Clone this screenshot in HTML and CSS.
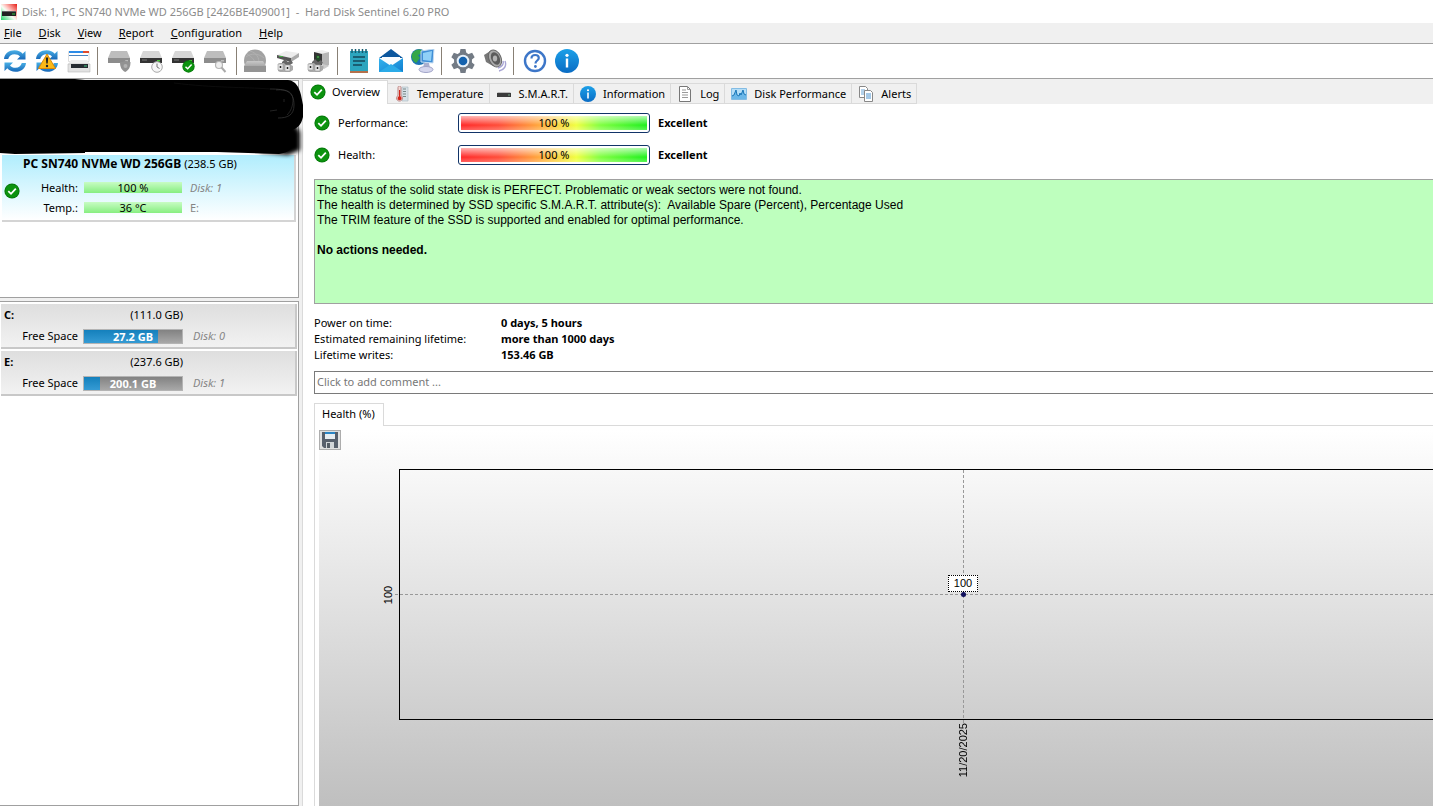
FILE: index.html
```
<!DOCTYPE html>
<html lang="en">
<head>
<meta charset="utf-8">
<title>Hard Disk Sentinel</title>
<link rel="stylesheet" href="styles.css">
</head>
<body>
<svg class="defs" aria-hidden="true">
  <defs>
    <linearGradient id="blueV" x1="0" y1="0" x2="0" y2="1"><stop offset="0" stop-color="#4ab0e6"/><stop offset="1" stop-color="#1768b8"/></linearGradient>
    <linearGradient id="info" x1="0" y1="0" x2="0" y2="1"><stop offset="0" stop-color="#1ca0e8"/><stop offset="1" stop-color="#0a6cc4"/></linearGradient>
    <linearGradient id="greyV" x1="0" y1="0" x2="0" y2="1"><stop offset="0" stop-color="#c8c8c8"/><stop offset="1" stop-color="#858585"/></linearGradient>
    <linearGradient id="mail" x1="0" y1="0" x2="1" y2="1"><stop offset="0" stop-color="#35b4ee"/><stop offset="1" stop-color="#0f7ed0"/></linearGradient>
    <linearGradient id="logo" x1="0" y1="1" x2="1" y2="0"><stop offset="0" stop-color="#22d466"/><stop offset=".45" stop-color="#f6fff6"/><stop offset=".6" stop-color="#ffc4c0"/><stop offset="1" stop-color="#e51c14"/></linearGradient>
    <symbol id="ok" viewBox="0 0 16 16"><circle cx="8" cy="8" r="7.6" fill="#067a0b"/><circle cx="8" cy="8" r="6.6" fill="#0c930f"/><path d="M4.3 8.2 7 10.8 11.8 5.6" fill="none" stroke="#fff" stroke-width="1.8"/></symbol>
    <symbol id="infoicon" viewBox="0 0 24 24"><circle cx="12" cy="12" r="12" fill="url(#info)"/><circle cx="12" cy="6.3" r="1.6" fill="#fff"/><path d="M10.8 9.6h2.4v9h-2.4z" fill="#fff"/></symbol>
    <symbol id="sync" viewBox="0 0 24 24"><path d="M1 10C1.5 4.500 6 1.200 11.500 1.200c3.600 0 6.300 1.300 8.200 3.500L22.500 2v8.500H14l3-3C15.700 6 13.900 5.200 11.500 5.200 8.300 5.200 6 7.200 5.200 10z" fill="url(#blueV)"/><path d="M23 14c-.5 5.500-5 8.800-10.500 8.800-3.600 0-6.300-1.300-8.200-3.500L1.500 22v-8.500H10l-3 3c1.300 1.500 3.100 2.300 5.500 2.300 3.200 0 5.500-2 6.300-4.800z" fill="url(#blueV)"/></symbol>
    <symbol id="drive" viewBox="0 0 24 24"><path d="M4 2h16l3 7H1z" fill="#d6d6d6"/><path d="M1 9h22v5H1z" fill="#333"/><path d="M3 11h5" stroke="#777"/><path d="M18 11h3v1.500h-3z" fill="#45c832"/></symbol>
    <symbol id="driveoff" viewBox="0 0 24 24"><path d="M4 2h16l3 7H1z" fill="#bdbdbd"/><path d="M1 9h22v5H1z" fill="#8c8c8c"/><path d="M18 11h3v1.500h-3z" fill="#bbb"/></symbol>
    <symbol id="plugs" viewBox="0 0 24 24"><path d="M7 13l3-3 3 3 3-2 2 3-3 2H7z" fill="#666"/><path d="M3 15l2-1h4l2 2h5l2 1v4l-3 2H5l-2-1z" fill="#aaa"/><path d="M3 15h5v6H3zM10 16h5v6h-5z" fill="#e4e4e4" stroke="#999" stroke-width=".6"/><path d="M5.500 17v2M12.500 18v2" stroke="#222" stroke-width="1.500"/></symbol>
  </defs>
</svg>

<header class="titlebar">
  <svg class="logo" viewBox="0 0 16 16"><path d="M0 0h16v16H0z" fill="url(#logo)"/><path d="M1 7h14v5H1z" fill="#222"/><path d="M1 7h14v1H1z" fill="#666"/><path d="M11 10h3" stroke="#3c4"/></svg>
  <h1 class="title">Disk: 1, PC SN740 NVMe WD 256GB [2426BE409001]&nbsp; -&nbsp; Hard Disk Sentinel 6.20 PRO</h1>
</header>

<nav class="menubar">
  <button class="menu"><u>F</u>ile</button>
  <button class="menu"><u>D</u>isk</button>
  <button class="menu"><u>V</u>iew</button>
  <button class="menu"><u>R</u>eport</button>
  <button class="menu"><u>C</u>onfiguration</button>
  <button class="menu"><u>H</u>elp</button>
</nav>

<div class="toolbar" role="toolbar">
  <button class="tool" aria-label="Refresh"><svg class="ico24"><use href="#sync"/></svg></button>
  <button class="tool" aria-label="Refresh with warning"><svg class="ico24" viewBox="0 0 24 24"><use href="#sync"/><path d="M12 5 20.500 19.500h-17z" fill="#fbb917" stroke="#dd8a0a" stroke-linejoin="round"/><path d="M10.800 8.500h2.400l-.5 6h-1.400z" fill="#222"/><circle cx="12" cy="17" r="1.200" fill="#222"/></svg></button>
  <button class="tool" aria-label="Disk window"><svg class="ico24" viewBox="0 0 24 24"><path d="M1.500 2.500h20.500v10H1.500z" fill="#fff" stroke="#ddd"/><path d="M2 2h14v2H2z" fill="#2d8ce8"/><path d="M16 2h6v2h-6z" fill="#e04a2c"/><path d="M2 6.500h19" stroke="#4a84c0"/><path d="M4 11h16l3 4H1z" fill="#ececec"/><path d="M1 15h22v8H1z" fill="#e2e2e2" stroke="#bbb" stroke-width=".6"/><path d="M4 15h17v4H4z" fill="#252a30"/><path d="M17 17h3" stroke="#4c8"/></svg></button>
  <span class="sep"></span>
  <button class="tool" aria-label="Disk protection" disabled><svg class="ico24" viewBox="0 0 24 24"><use href="#driveoff"/><path d="M13 13c2 0 4-.5 5.500-1.500C20 12.500 22 13 23.500 13c0 5-1.500 8-5.300 10C14.500 21 13 18 13 13z" fill="#929292"/><circle cx="18.500" cy="17" r="2" fill="#b2b2b2"/></svg></button>
  <button class="tool" aria-label="Disk schedule"><svg class="ico24" viewBox="0 0 24 24"><use href="#drive"/><circle cx="18" cy="18" r="5.300" fill="#f6f6f6" stroke="#aaa"/><path d="M18 14.500V18l2.500 1.500" fill="none" stroke="#777"/></svg></button>
  <button class="tool" aria-label="Disk test"><svg class="ico24" viewBox="0 0 24 24"><use href="#drive"/><use href="#ok" x="11" y="11" width="13" height="13"/></svg></button>
  <button class="tool" aria-label="Disk search" disabled><svg class="ico24" viewBox="0 0 24 24"><use href="#driveoff"/><circle cx="16" cy="16" r="3.500" fill="#eee" stroke="#b5b5b5" stroke-width="1.200"/><path d="m18.500 18.500 4 4.500" stroke="#aaa" stroke-width="2"/></svg></button>
  <span class="sep sep-late"></span>
  <button class="tool" aria-label="Network disk" disabled><svg class="ico24" viewBox="0 0 24 24"><circle cx="12" cy="11.500" r="11" fill="#a2a2a2"/><path d="M3 8c5-4 12-4 18 1M7 2c7 2 9 7 9 12M4 5c5 3 8 6 8 10" fill="none" stroke="#b0b0b0"/><path d="M4 12h16l3 5v6H1v-6z" fill="url(#greyV)"/><path d="M1 17h22v6H1z" fill="#949494"/></svg></button>
  <button class="tool" aria-label="Connect device"><svg class="ico24" viewBox="0 0 24 24"><path d="m2 6 9-4 13 2-8 5z" fill="#ededed"/><path d="m2 6 14 3v4L2 9z" fill="#555"/><path d="m16 9 8-5v4l-8 5z" fill="#aaa"/><path d="M4 7.500h4" stroke="#4a4"/><use href="#plugs"/></svg></button>
  <button class="tool" aria-label="Connect enclosure"><svg class="ico24" viewBox="0 0 24 24"><path d="m7 3 8-2 7 2-8 2z" fill="#eee"/><path d="m14 5 8-2v13l-6 4z" fill="#b5b5b5"/><path d="M7 3l8 2v11l-8-2z" fill="#333"/><path d="m9 6 4 1v5l-4-1z" fill="#264b2c"/><path d="M10 8h2" stroke="#5c5"/><path d="m16 15 6 2-5 3z" fill="#ccc"/><g transform="translate(-2)"><use href="#plugs"/></g></svg></button>
  <span class="sep"></span>
  <button class="tool" aria-label="Report"><svg class="ico24" viewBox="0 0 24 24"><path d="M3 2h18v20H3z" fill="#2ca5be"/><path d="M3 22h18v2H3z" fill="#b4714b"/><path d="M5 0v4M8.500 0v4M12 0v4M15.500 0v4M19 0v4" stroke="#135b70" stroke-width="1.500"/><path d="M6 8h12M6 12h12M6 16h9" stroke="#14475a" stroke-width="1.500"/></svg></button>
  <button class="tool" aria-label="Send mail"><svg class="ico24" viewBox="0 0 24 24"><path d="M0 9 12 0l12 9z" fill="#0c579e"/><path d="M3 8h18v9H3z" fill="#f8fcff"/><path d="m0 9 12 8L24 9v14H0z" fill="url(#mail)"/><path d="m0 23 12-8 12 8z" fill="#2babe8"/></svg></button>
  <button class="tool" aria-label="Network"><svg class="ico24" viewBox="0 0 24 24"><circle cx="8" cy="8" r="8" fill="#1b73b4"/><path d="M1 5c3-5 7-5 10-4l-1 4-3 1 2 3-4 5C2 12 0 9 1 5z" fill="#35a748"/><path d="m10 2 13-2-1 14-12-1z" fill="#3f8ed6" stroke="#c4dcf2"/><path d="m12 4 9-2-1 10-8-1z" fill="#90d0f7"/><path d="M13 14h5l1 5h-7z" fill="#a9afcf"/><ellipse cx="15" cy="20.500" rx="7" ry="3" fill="#d5d6ed" stroke="#a0a4c8"/></svg></button>
  <span class="sep"></span>
  <button class="tool" aria-label="Settings"><svg class="ico24" viewBox="0 0 24 24"><g fill="#737b85"><circle cx="12" cy="12" r="9"/><g id="teeth"><path d="M9.500 0h5l1 5h-7zM9.500 24h5l1-5h-7z"/></g><use href="#teeth" transform="rotate(60 12 12)"/><use href="#teeth" transform="rotate(120 12 12)"/></g><circle cx="12" cy="12" r="6.300" fill="#e7f1fa"/><circle cx="12" cy="12" r="4.300" fill="#1462ae"/></svg></button>
  <button class="tool" aria-label="Sound"><svg class="ico24" viewBox="0 0 24 24"><path d="M1 6 9 1l9 15-8 1-7-4z" fill="#777"/><ellipse cx="12" cy="9.500" rx="6" ry="9" transform="rotate(-25 12 9.500)" fill="#aaa" stroke="#666"/><ellipse cx="12.500" cy="9.500" rx="4.200" ry="6.500" transform="rotate(-25 12.500 9.500)" fill="#5c5c5c"/><ellipse cx="12" cy="9.500" rx="2.200" ry="3" fill="#b4b4b4"/><path d="M20 12c1 3-1 6-5 7M22 12c2 5-1 9-6 10" fill="none" stroke="#a8a5d4" stroke-width="1.400"/></svg></button>
  <span class="sep"></span>
  <button class="tool" aria-label="Help"><svg class="ico24" viewBox="0 0 24 24"><circle cx="12" cy="12" r="10" fill="#fff" stroke="#3d76c8" stroke-width="2.400"/><path d="M8.500 9.500C8.500 7.200 10 6 12.200 6c2.100 0 3.600 1.100 3.600 3 0 2.500-3.300 2.600-3.300 5.500" fill="none" stroke="#3d76c8" stroke-width="2.200"/><circle cx="12.400" cy="17.500" r="1.400" fill="#3d76c8"/></svg></button>
  <button class="tool" aria-label="About"><svg class="ico24"><use href="#infoicon"/></svg></button>
</div>

<div class="workspace">
  <aside class="sidebar">
    <section class="pane disks">
      <svg class="scribble" viewBox="0 0 304 80" aria-hidden="true">
        <defs><filter id="soft" x="-10%" y="-10%" width="120%" height="120%"><feGaussianBlur stdDeviation="2"/></filter></defs>
        <path d="M258 45h36l6 8v18l-12 5-28-3z" filter="url(#soft)"/>
        <path d="M0 0h75l10 1h203c8 1 11 7 13 15l2 10v12c-2 8-5 11-11 13v17c-2 4-7 6-13 7l-62-2H85v1l-70 1-15-1z"/>
        <path d="M174 4c40 5 70 4 96 6" fill="none" stroke="#0c0c0c"/>
        <path d="M270 10c16 0 24 2 24 16 0 10-6 13-16 13" fill="none" stroke="#333" stroke-width=".8"/>
        <path d="M276 11c12-1 16 2 17 9 0 7-2 12-6 16M270 32l7-1M284 20v3" fill="none" stroke="#444" stroke-width=".5"/>
      </svg>
      <article class="disk">
        <h2 class="disk-name"><b>PC SN740 NVMe WD 256GB</b> (238.5 GB)</h2>
        <svg class="ico16 disk-ok"><use href="#ok"/></svg>
        <dl class="stats">
          <dt>Health:</dt><dd class="meter">100 %</dd><dd class="hint">Disk: 1</dd>
          <dt>Temp.:</dt><dd class="meter">36 °C</dd><dd class="hint hint-drive">E:</dd>
        </dl>
      </article>
    </section>
    <section class="pane volumes">
      <article class="volume">
        <b>C:</b><span class="size">(111.0 GB)</span><span></span>
        <span class="free">Free Space</span>
        <span class="usage"><span class="fill" style="width:76%"></span><b class="value">27.2 GB</b></span>
        <span class="hint">Disk: 0</span>
      </article>
      <article class="volume">
        <b>E:</b><span class="size">(237.6 GB)</span><span></span>
        <span class="free">Free Space</span>
        <span class="usage"><span class="fill" style="width:16%"></span><b class="value">200.1 GB</b></span>
        <span class="hint">Disk: 1</span>
      </article>
    </section>
  </aside>

  <main class="main">
    <div class="tabs" role="tablist">
      <button class="tab active" role="tab"><svg class="ico16"><use href="#ok"/></svg>Overview</button>
      <button class="tab" role="tab"><svg class="ico16" viewBox="0 0 16 16"><path d="M8 1h6v14H8z" fill="#d8e2e8" stroke="#a9b8c0" stroke-width=".6"/><path d="M9 3h3M9 5.500h3M9 8h3M9 10.500h3" stroke="#788"/><path d="M4 1.500c0-2 3-2 3 0v8a3 3 0 1 1-3 0z" fill="#f4d8d4" stroke="#b88"/><path d="M5 4h1.200v6.300a2 2 0 1 1-1.200 0z" fill="#d0281c"/></svg>Temperature</button>
      <button class="tab" role="tab"><svg class="ico16" viewBox="0 0 16 16"><path d="M2 6h12l1 1H1z" fill="#bbb"/><path d="M1 7h14v4H1z" fill="#3b3b3b"/><path d="M12 9h2" stroke="#7a8"/></svg>S.M.A.R.T.</button>
      <button class="tab" role="tab"><svg class="ico16"><use href="#infoicon"/></svg>Information</button>
      <button class="tab" role="tab"><svg class="ico16" viewBox="0 0 16 16"><path d="M2.500.5h8l3 3v12h-11z" fill="#fff" stroke="#777"/><path d="M10.500.5v3h3M5 4h4M5 6.500h6M5 9h6M5 11.500h6" fill="none" stroke="#999"/></svg>Log</button>
      <button class="tab" role="tab"><svg class="ico16" viewBox="0 0 16 16"><path d="M.5 2.500h15v11H.5z" fill="#b5def7" stroke="#83bce4"/><path d="m1 10 2-1 2-5 1 5 2 1 1-3 1 2 2-5 1 4 2 1v4H1z" fill="#6bb7e8"/><path d="m1 10 2-1 2-5 1 5 2 1 1-3 1 2 2-5 1 4 2 1" fill="none" stroke="#1976b8"/></svg>Disk Performance</button>
      <button class="tab" role="tab"><svg class="ico16" viewBox="0 0 16 16"><path d="M1.500.5h6l2 2v9h-8z" fill="#fff" stroke="#888"/><path d="M3 4h4M3 6h4M3 8h4" stroke="#69a5d8"/><path d="M6.500 4.500h6l2 2v9h-8z" fill="#fff" stroke="#888"/><path d="M8 8h5M8 10h5M8 12h5" stroke="#4b93d0"/></svg>Alerts</button>
    </div>

    <div class="content">
      <section class="ratings">
        <div class="rating"><svg class="ico16"><use href="#ok"/></svg><span class="rating-name">Performance:</span><span class="gauge"><span class="gauge-fill">100 %</span></span><b>Excellent</b></div>
        <div class="rating"><svg class="ico16"><use href="#ok"/></svg><span class="rating-name">Health:</span><span class="gauge"><span class="gauge-fill">100 %</span></span><b>Excellent</b></div>
      </section>

      <section class="status">
        <p>The status of the solid state disk is PERFECT. Problematic or weak sectors were not found.</p>
        <p>The health is determined by SSD specific S.M.A.R.T. attribute(s):&nbsp; Available Spare (Percent), Percentage Used</p>
        <p>The TRIM feature of the SSD is supported and enabled for optimal performance.</p>
        <p class="action">No actions needed.</p>
      </section>

      <dl class="facts">
        <dt>Power on time:</dt><dd>0 days, 5 hours</dd>
        <dt>Estimated remaining lifetime:</dt><dd>more than 1000 days</dd>
        <dt>Lifetime writes:</dt><dd>153.46 GB</dd>
      </dl>

      <input class="comment" type="text" aria-label="Comment" placeholder="Click to add comment ...">

      <section class="history">
        <button class="history-tab" role="tab">Health (%)</button>
        <div class="history-panel">
          <div class="chart">
            <button class="save" aria-label="Save chart"><svg class="ico16" viewBox="0 0 16 16"><path d="M0 0h16v16H2l-2-2z" fill="#58606c"/><path d="M3 0h10v7H3z" fill="#e8eef2"/><path d="M3 0h10v2H3z" fill="#2b86c6"/><path d="M4 10h8v6H4z" fill="#d2d6d8"/><path d="M5 11h3v5H5z" fill="#555d66"/></svg></button>
            <div class="plot">
              <span class="grid-h"></span>
              <span class="axis-y">100</span>
              <div class="point" style="left:54.5%">
                <span class="point-label">100</span>
                <span class="dot"></span>
                <span class="axis-x">11/20/2025</span>
              </div>
            </div>
          </div>
        </div>
      </section>
    </div>
  </main>
</div>
</body>
</html>
```
FILE: styles.css
```
* { box-sizing: border-box; }

body {
  display: flex;
  flex-direction: column;
  min-height: 100vh;
  margin: 0;
  overflow-x: hidden;
  background: #fff;
  color: #000;
  font: 11px/16px "Noto Sans", "Open Sans", sans-serif;
}

button {
  margin: 0;
  padding: 0;
  border: 0;
  background: none;
  color: inherit;
  font: inherit;
}

h1, h2, p, dl, dd { margin: 0; font: inherit; }
svg { display: block; flex: none; }
.defs { position: absolute; width: 0; height: 0; }
.ico16 { width: 16px; height: 16px; }
.ico24 { width: 24px; height: 24px; }

/* Window header */
.titlebar {
  display: flex;
  align-items: center;
  gap: 5px;
  height: 23px;
  padding-left: 1px;
}
.logo { width: 16px; height: 16px; }
.title { color: #8c8c8c; white-space: nowrap; }

.menubar {
  display: flex;
  height: 21px;
  padding-left: 4px;
  gap: 17px;
  border-bottom: 1px solid #a0a0a0;
  background: #f0f0f0;
}

.toolbar {
  display: flex;
  align-items: center;
  height: 35px;
  border-bottom: 1px solid #a0a0a0;
}
.tool { width: 32px; padding: 0 5px 0 3px; }
.sep {
  width: 1px;
  height: 28px;
  margin: 0 6px 0 1px;
  background: #888075;
}
.sep-late { margin: 0 3px 0 4px; }

/* Layout */
.workspace { display: flex; flex: 1; }

.sidebar {
  display: flex;
  flex-direction: column;
  flex: none;
  width: 303px;
  padding: 1px 3px 0 0;
  gap: 3px;
  border-right: 1px solid #dadada;
  background: #f0f0f0;
}
.pane {
  position: relative;
  border: solid #a0a0a0;
  border-width: 1px 1px 1px 0;
  background: #fff;
}
.disks { height: 218px; padding: 74px 2px 0; }
.volumes { flex: 1; padding: 2px 1px; }

.scribble {
  position: absolute;
  top: -2px;
  left: 0;
  z-index: 1;
  width: 304px;
  height: 80px;
}

.disk {
  display: grid;
  grid-template-columns: 20px 1fr;
  height: 67px;
  padding: 1px 0;
  border: solid #d4d4d4;
  border-width: 0 2px 2px 0;
  background: linear-gradient(#b0edfd, #fff);
}
.disk-name {
  grid-column: 1 / -1;
  padding-left: 21px;
  white-space: nowrap;
}
.disk-name b { font-size: 12px; }
.disk-ok { margin: 9px 0 0 2px; }
.stats {
  display: grid;
  grid-template-columns: 56px 98px 1fr;
  grid-auto-rows: 20px;
  align-items: center;
  column-gap: 6px;
  padding-top: 4px;
}
.stats dt { text-align: right; }
.meter {
  height: 11px;
  background: linear-gradient(#c8fcc4, #86ee80);
  line-height: 11px;
  text-align: center;
}
.hint { padding-left: 2px; color: #858585; font-style: italic; }
.hint-drive { font-style: normal; }

.volume {
  display: grid;
  grid-template-columns: 74px 100px 1fr;
  grid-template-rows: 22px 20px;
  align-items: center;
  column-gap: 5px;
  height: 45px;
  margin-bottom: 2px;
  padding-left: 3px;
  border: solid #c8c8c8;
  border-width: 0 2px 2px 0;
  background: linear-gradient(#dedede, #f2f2f2);
}
.size, .free { text-align: right; }
.volume .hint { padding-left: 5px; }
.usage {
  position: relative;
  height: 15px;
  border: 1px solid #b4b4b4;
  background: linear-gradient(#828282, #a8a8a8);
  color: #fff;
  line-height: 13px;
  text-align: center;
}
.fill {
  position: absolute;
  top: 0;
  left: 0;
  height: 100%;
  background: linear-gradient(#1480bc, #359bd4);
}
.value { position: relative; }

/* Tabs */
.main { display: flex; flex: 1; flex-direction: column; min-width: 0; }
.tabs {
  display: flex;
  align-items: flex-end;
  height: 25px;
  background: #f0f0f0;
}
.tab {
  display: flex;
  align-items: center;
  gap: 7px;
  height: 21px;
  padding: 0 5px 0 6px;
  border: 1px solid #dadada;
  border-width: 1px 1px 1px 0;
  white-space: nowrap;
}
.tab.active {
  gap: 6px;
  height: 24px;
  padding: 0 7px 2px 7px;
  border-bottom: 0;
  background: #fff;
}

.content {
  display: flex;
  flex: 1;
  flex-direction: column;
  padding: 3px 0 0 11px;
}
.rating {
  display: grid;
  grid-template-columns: 16px 112px 192px 1fr;
  align-items: center;
  column-gap: 8px;
  height: 32px;
}
.gauge {
  height: 20px;
  padding: 2px;
  border: 1px solid #123468;
  border-radius: 3px;
}
.gauge-fill {
  display: block;
  height: 14px;
  background:
    linear-gradient(rgba(255,255,255,.65), rgba(255,255,255,0) 65%, rgba(255,255,255,.25)),
    linear-gradient(90deg, #ff2a2a, #ff4c38 20%, #ffb43c 45%, #f0ff40 62%, #80ff40 75%, #1ef01e);
  line-height: 14px;
  text-align: center;
}

.status {
  height: 125px;
  margin-top: 8px;
  padding: 3px 2px;
  border: 1px solid #a0a0a0;
  border-right: 0;
  background: #beffbe;
  font: 12px/15px "Liberation Sans", Arial, sans-serif;
}
.action { margin-top: 15px; font-weight: bold; }

.facts {
  display: grid;
  grid-template-columns: 187px 1fr;
  margin-top: 11px;
}
.facts dd { font-weight: bold; }

.comment {
  width: 100%;
  height: 23px;
  margin-top: 8px;
  padding: 0 2px 2px;
  border: 1px solid #7a7a7a;
  border-right: 0;
  border-radius: 0;
  background: #fff;
  font: inherit;
}
.comment::placeholder { color: #777; opacity: 1; }

/* History chart */
.history {
  display: flex;
  flex: 1;
  flex-direction: column;
  align-items: flex-start;
  margin-top: 9px;
}
.history-tab {
  z-index: 1;
  height: 23px;
  margin-bottom: -1px;
  padding: 0 8px 2px 7px;
  border: 1px solid #dadada;
  border-bottom: 0;
  background: #fff;
}
.history-panel {
  display: flex;
  flex: 1;
  width: 100%;
  padding: 4px 0 0 4px;
  border: solid #dadada;
  border-width: 1px 0 0 1px;
}
.chart {
  display: flex;
  flex: 1;
  flex-direction: column;
  align-items: flex-start;
  padding-bottom: 86px;
  background: linear-gradient(#fff, #bfbfbf);
}
.save {
  display: flex;
  align-items: center;
  justify-content: center;
  width: 22px;
  height: 20px;
  border: 1px solid #adadad;
  background: #e1e1e1;
}
.plot {
  position: relative;
  flex: 1;
  align-self: stretch;
  min-height: 200px;
  margin: 19px 0 0 80px;
  border: 1px solid #000;
  border-right: 0;
  font: 11px/13px "Liberation Sans", Arial, sans-serif;
}
.grid-h {
  position: absolute;
  bottom: 50%;
  right: 0;
  left: -5px;
  border-top: 1px dashed #999;
}
.axis-y {
  position: absolute;
  top: 50%;
  left: -18px;
  transform: translateY(-50%) rotate(180deg);
  writing-mode: vertical-rl;
}
.point {
  position: absolute;
  top: 0;
  bottom: -4px;
  border-left: 1px dashed #999;
}
.point-label {
  position: absolute;
  bottom: 50%;
  left: 0;
  width: 30px;
  margin: 0 0 5px -16px;
  border: 1px dotted #000;
  background: #fff;
  line-height: 15px;
  text-align: center;
}
.dot {
  position: absolute;
  top: 50%;
  left: -3px;
  width: 5px;
  height: 5px;
  margin-top: -5px;
  border-radius: 50%;
  background: #10105c;
}
.axis-x {
  position: absolute;
  top: 100%;
  left: -7px;
  transform: rotate(180deg);
  writing-mode: vertical-rl;
}
```
